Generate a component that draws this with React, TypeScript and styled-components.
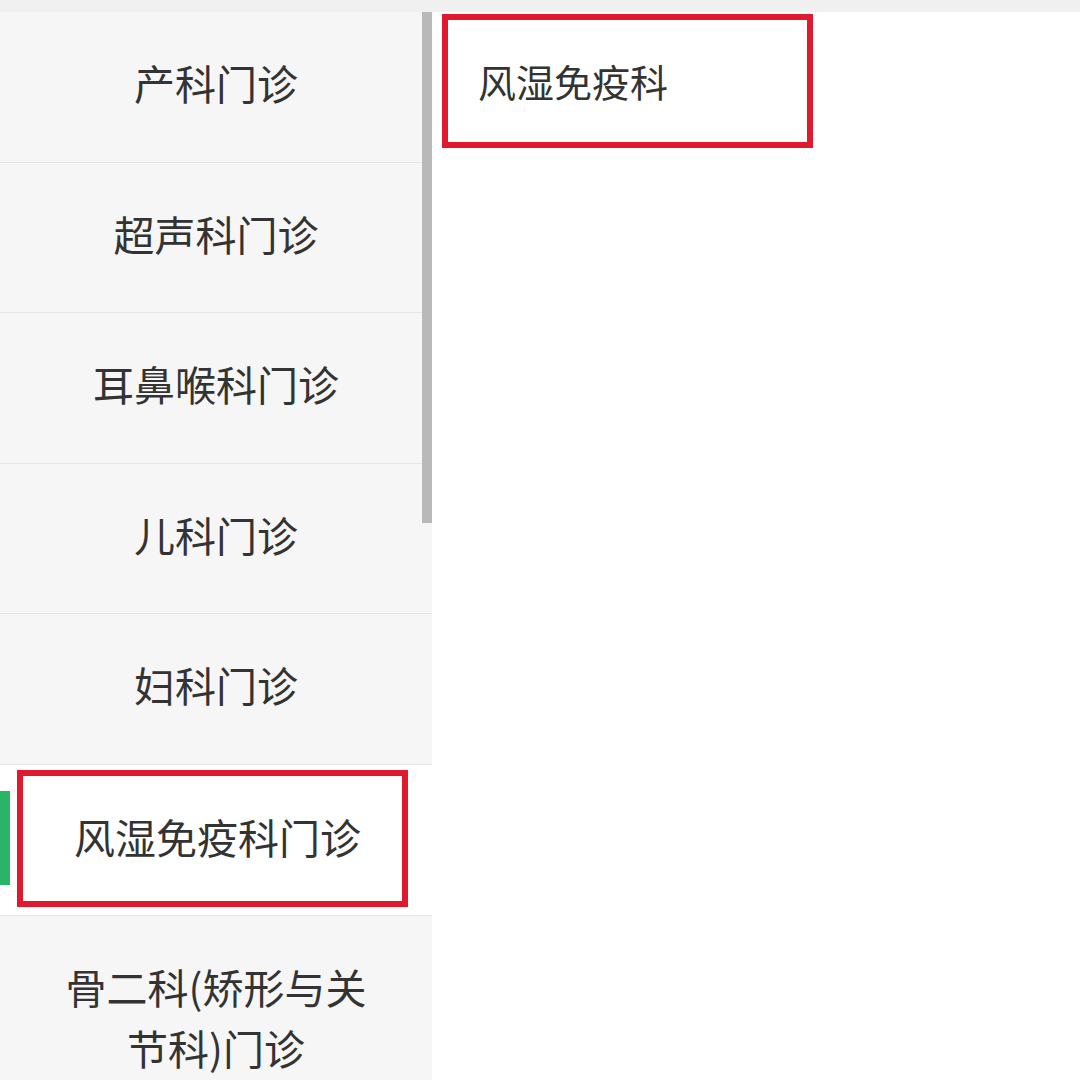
import React from "react";
import styled, { createGlobalStyle } from "styled-components";

const GlobalStyle = createGlobalStyle`
  html, body {
    margin: 0;
    padding: 0;
    background: #ffffff;
  }
  body {
    font-family: "Noto Sans CJK SC", "Noto Sans", sans-serif;
    color: #333333;
  }
  * { box-sizing: border-box; }
`;

const Page = styled.div`
  width: 1080px;
  height: 1080px;
  overflow: hidden;
  display: flex;
  flex-direction: column;
  background: #ffffff;
`;

const TopStrip = styled.div`
  height: 12px;
  flex: none;
  background: #f0f0f0;
`;

const Body = styled.div`
  flex: 1;
  display: flex;
  min-height: 0;
`;

const Sidebar = styled.div`
  position: relative;
  width: 432px;
  flex: none;
  background: #f6f6f6;
  display: flex;
  flex-direction: column;
`;

const ScrollThumb = styled.div`
  position: absolute;
  top: 0;
  right: 0;
  width: 10px;
  height: 511px;
  background: #b9b9b9;
`;

const Row = styled.div`
  flex: none;
  padding: 40px 50px 48px;
  line-height: 61.6px;
  font-size: 41px;
  color: #333333;
  text-align: center;
  border-bottom: 1px solid #e6e6e6;
`;

const ActiveRow = styled.div`
  flex: none;
  height: 150.6px;
  display: flex;
  align-items: center;
  padding: 5px 24px 8px 0;
  background: #ffffff;
  border-bottom: 1px solid #e6e6e6;
`;

const ActiveBar = styled.div`
  width: 10px;
  height: 94px;
  flex: none;
  margin-right: 7px;
  background: #2ab468;
`;

const Annotation = styled.div<{ $pad?: number }>`
  border: 6px solid #e1192f;
  display: flex;
  align-items: center;
  padding-left: ${(p) => p.$pad ?? 0}px;
`;

const ActiveFrame = styled(Annotation)`
  flex: 1;
  align-self: stretch;
  justify-content: center;
  font-size: 41px;
  color: #333333;
  padding-bottom: 4px;
`;

const Content = styled.div`
  flex: 1;
  background: #ffffff;
  padding: 2px 0 0 10px;
`;

const SubItem = styled(Annotation)`
  width: 371px;
  height: 134px;
  font-size: 38px;
  color: #333333;
  padding-bottom: 2px;
`;

const departments = [
  "产科门诊",
  "超声科门诊",
  "耳鼻喉科门诊",
  "儿科门诊",
  "妇科门诊",
];

export default function App() {
  return (
    <>
      <GlobalStyle />
      <Page>
        <TopStrip />
        <Body>
          <Sidebar>
            {departments.map((d) => (
              <Row key={d}>{d}</Row>
            ))}
            <ActiveRow>
              <ActiveBar />
              <ActiveFrame $pad={10}>风湿免疫科门诊</ActiveFrame>
            </ActiveRow>
            <Row>骨二科(矫形与关节科)门诊</Row>
            <ScrollThumb />
          </Sidebar>
          <Content>
            <SubItem $pad={30}>风湿免疫科</SubItem>
          </Content>
        </Body>
      </Page>
    </>
  );
}
